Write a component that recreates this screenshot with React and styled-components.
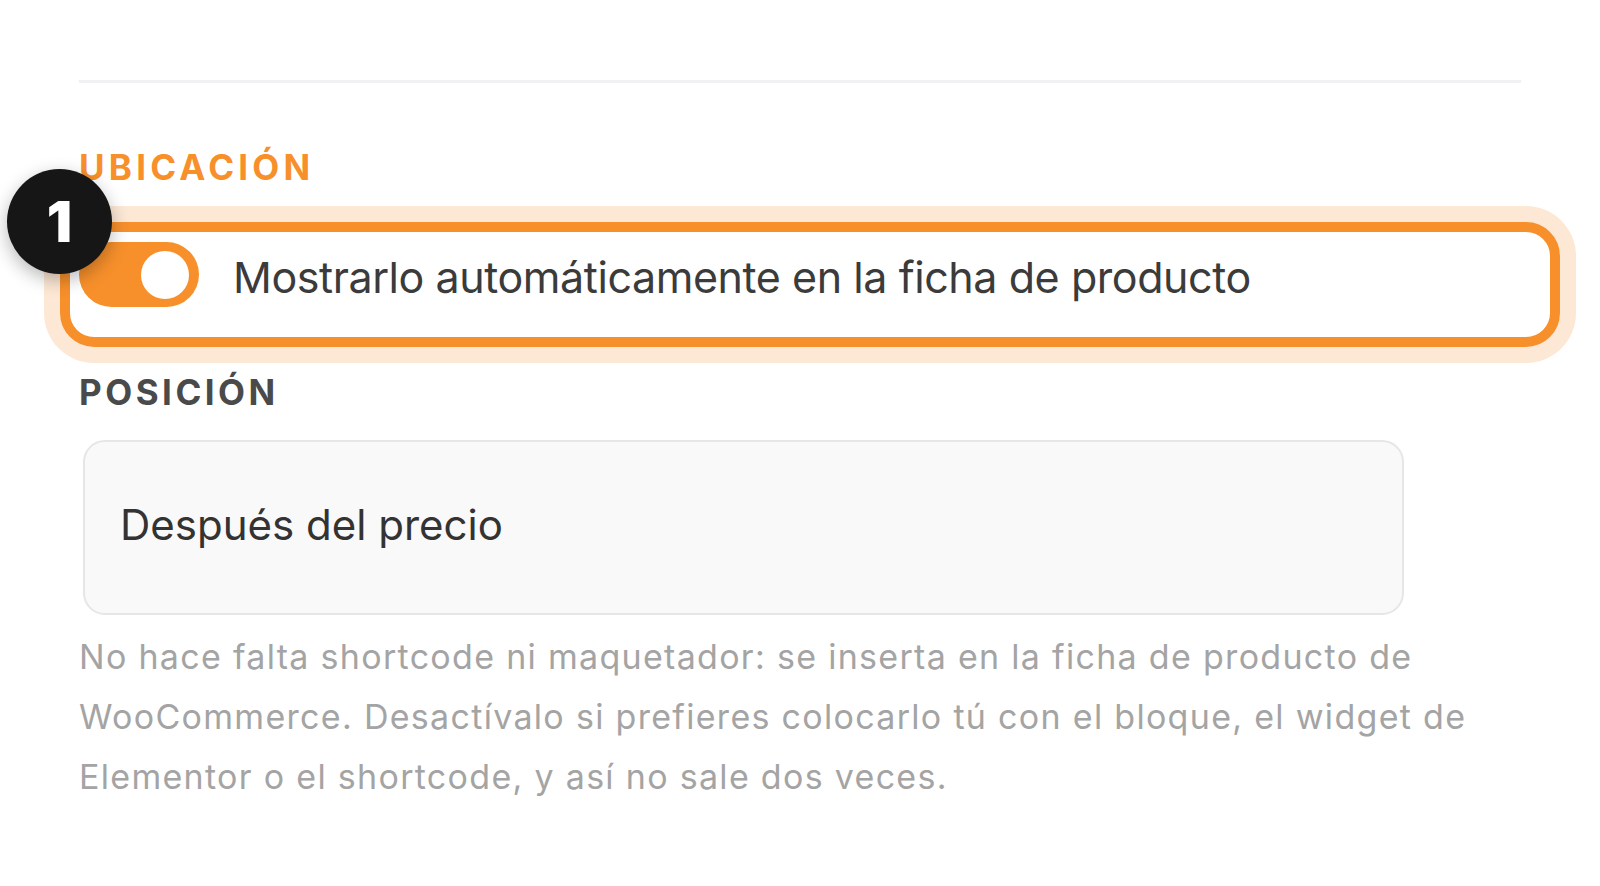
import React from 'react'
import styled, { createGlobalStyle } from 'styled-components'

const GlobalStyle = createGlobalStyle`
  html, body {
    margin: 0;
    padding: 0;
    background: #ffffff;
  }
  body {
    font-family: Inter, "Noto Sans", "Liberation Sans", sans-serif;
    -webkit-font-smoothing: antialiased;
  }
`

const Page = styled.div`
  padding: 80px 79px 0 79px;
  display: flex;
  flex-direction: column;
`

const Divider = styled.div`
  height: 3px;
  background: #f1f1f4;
  margin-bottom: 67px;
`

const SectionTitle = styled.h3`
  margin: 0;
  font-size: 35px;
  line-height: 1;
  font-weight: 700;
  letter-spacing: ${p => (p.accent ? '0.12em' : '0.1em')};
  text-transform: uppercase;
  color: ${p => (p.accent ? '#f7902b' : '#4a4a4a')};
`

const ToggleRow = styled.label`
  position: relative;
  display: flex;
  align-items: center;
  gap: 34px;
  margin-top: 57px;
  margin-bottom: 68px;
  height: 65px;
`

const Highlight = styled.span`
  position: absolute;
  top: -20px;
  bottom: -40px;
  left: -19px;
  right: -39px;
  border: 10px solid #f7902b;
  border-radius: 34px;
  box-shadow: 0 0 0 16px #fde8d5;
  pointer-events: none;
`

const StepBadge = styled.span`
  position: absolute;
  top: -73px;
  left: -72px;
  width: 105px;
  height: 105px;
  border-radius: 50%;
  background: #161616;
  color: #ffffff;
  display: flex;
  align-items: center;
  justify-content: center;
  font-size: 56px;
  font-weight: 900;
  box-shadow: 0 6px 18px rgba(0, 0, 0, 0.28);
  z-index: 2;
`

const Switch = styled.span`
  position: relative;
  flex: none;
  width: 120px;
  height: 65px;
  border-radius: 33px;
  background: ${p => (p.on ? '#f7902b' : '#d6d6d6')};
  display: flex;
  align-items: center;
  justify-content: ${p => (p.on ? 'flex-end' : 'flex-start')};
  padding: 0 10px;
  box-sizing: border-box;
`

const Knob = styled.span`
  width: 48px;
  height: 48px;
  border-radius: 50%;
  background: #ffffff;
`

const ToggleText = styled.span`
  font-size: 43px;
  color: #3b3b3b;
  letter-spacing: -0.01em;
  margin-top: 4px;
`

const SelectBox = styled.div`
  margin: 30px 0 12px 4px;
  width: 1321px;
  height: 175px;
  box-sizing: border-box;
  border: 2px solid #e6e6e9;
  border-radius: 22px;
  background: #f9f9fa;
  display: flex;
  align-items: center;
  padding-left: 35px;
  padding-bottom: 6px;
  font-size: 42px;
  color: #333333;
`

const HelpText = styled.p`
  margin: 0;
  font-size: 34px;
  line-height: 60px;
  letter-spacing: 1.3px;
  color: #a4a4a4;
`

export default function App() {
  return (
    <>
      <GlobalStyle />
      <Page>
        <Divider />
        <SectionTitle accent>Ubicación</SectionTitle>
        <ToggleRow>
          <Highlight />
          <StepBadge>1</StepBadge>
          <Switch on>
            <Knob />
          </Switch>
          <ToggleText>Mostrarlo automáticamente en la ficha de producto</ToggleText>
        </ToggleRow>
        <SectionTitle>Posición</SectionTitle>
        <SelectBox>Después del precio</SelectBox>
        <HelpText>
          No hace falta shortcode ni maquetador: se inserta en la ficha de producto de
          <br />
          WooCommerce. Desactívalo si prefieres colocarlo tú con el bloque, el widget de
          <br />
          Elementor o el shortcode, y así no sale dos veces.
        </HelpText>
      </Page>
    </>
  )
}
